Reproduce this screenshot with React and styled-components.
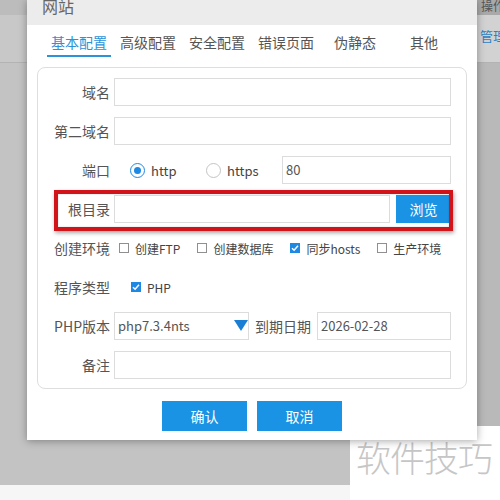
import React from 'react';
import styled, { createGlobalStyle } from 'styled-components';

const GlobalStyle = createGlobalStyle`
  html, body {
    margin: 0;
    padding: 0;
  }
  body {
    font-family: "Noto Sans CJK SC", "Liberation Sans", sans-serif;
    color: #555;
  }
  * {
    box-sizing: border-box;
  }
`;

const BLUE = '#1b93e4';

const tabs = ['基本配置', '高级配置', '安全配置', '错误页面', '伪静态', '其他'];

const envOptions = [
  { label: '创建FTP', checked: false },
  { label: '创建数据库', checked: false },
  { label: '同步hosts', checked: true },
  { label: '生产环境', checked: false }
];

const Page = styled.div`
  position: relative;
  width: 500px;
  height: 500px;
  overflow: hidden;
  display: flex;
  flex-direction: column;
  background: #f6f6f6;
`;

const Backdrop = styled.div`
  height: 485px;
  display: flex;
  flex-direction: row;
  background: #c3c3c3;
`;

const Strip = styled.div`
  width: ${p => p.$width}px;
  display: flex;
  flex-direction: column;
  flex-shrink: 0;
`;

Strip.Head = styled.div`
  height: 15px;
  background: ${p => p.$bg};
  overflow: hidden;
  font-size: 12px;
  line-height: 12px;
  color: #555;
  padding-left: 4px;
  white-space: nowrap;
`;

Strip.Row = styled.div`
  height: 48px;
  background: ${p => p.$bg};
  border-bottom: 1px solid #b3b3b3;
  font-size: 13px;
  line-height: 42px;
  color: #2f7fc4;
  padding-left: 3px;
  white-space: nowrap;
  overflow: hidden;
`;

Strip.Rest = styled.div`
  flex: 1;
  background: ${p => p.$bg};
`;

const Dialog = styled.div`
  width: 450px;
  height: 440px;
  flex-shrink: 0;
  background: #fff;
  box-shadow: 0 1px 8px rgba(0, 0, 0, 0.35);
  display: flex;
  flex-direction: column;
  position: relative;
  z-index: 1;
`;

const Header = styled.div`
  height: 25px;
  background: #ececec;
  padding-left: 15px;
  overflow: hidden;
`;

const Title = styled.div`
  font-size: 16px;
  line-height: 16px;
  margin-top: -2px;
  color: #666;
`;

const TabBar = styled.div`
  display: flex;
  gap: 5px;
  padding-left: 20px;
  height: 32px;
`;

const Tab = styled.div`
  width: 64px;
  height: 32px;
  padding-top: 4px;
  line-height: 26px;
  text-align: center;
  font-size: 14px;
  color: ${p => (p.$active ? '#2d93d8' : '#555')};
  border-bottom: 2px solid ${p => (p.$active ? '#2d93d8' : 'transparent')};
`;

const Panel = styled.div`
  margin: 10px 10px 0;
  border: 1px solid #dedede;
  border-radius: 8px;
  padding: 10px 15px 9px 0;
  display: flex;
  flex-direction: column;
  gap: 11px;
`;

const Row = styled.div`
  position: relative;
  height: 28px;
  display: flex;
  align-items: center;
`;

const Label = styled.div`
  width: ${p => p.$width || 72}px;
  flex-shrink: 0;
  text-align: ${p => (p.$left ? 'left' : 'right')};
  margin: ${p => (p.$left ? '0 6px' : '0 4px 0 0')};
  font-size: 14px;
  color: #555;
  white-space: nowrap;
`;

const Input = styled.div`
  flex: ${p => (p.$width ? '0 0 auto' : '1')};
  width: ${p => (p.$width ? `${p.$width}px` : 'auto')};
  height: 28px;
  border: 1px solid #dcdcdc;
  padding-left: 3px;
  font-size: 13px;
  line-height: 26px;
  color: #555;
  display: flex;
  align-items: center;
  justify-content: space-between;
`;

const Arrow = styled.svg`
  width: 14px;
  height: 12px;
`;

// red marker drawn around the root-directory row
const Highlight = styled.div`
  position: absolute;
  left: 16px;
  right: -2px;
  top: -5px;
  bottom: -8px;
  border: 4px solid #d0141a;
  box-shadow: 1px 2px 4px rgba(0, 0, 0, 0.35), inset 0 0 2px rgba(0, 0, 0, 0.2);
  pointer-events: none;
`;

const Browse = styled.div`
  width: 55px;
  height: 28px;
  margin-left: 6px;
  background: ${BLUE};
  color: #fff;
  font-size: 14px;
  line-height: 28px;
  text-align: center;
`;

const RadioGroup = styled.div`
  display: flex;
  margin-left: 16px;
`;

const RadioItem = styled.div`
  width: 76px;
  display: flex;
  align-items: center;
  gap: 6px;
  font-size: 13px;
  color: #444;
`;

const RadioDot = styled.span`
  width: 15px;
  height: 15px;
  border-radius: 50%;
  border: 1px solid ${p => (p.$on ? '#1e88e5' : '#c4c4c4')};
  display: flex;
  align-items: center;
  justify-content: center;
  &::after {
    content: '';
    width: 7px;
    height: 7px;
    border-radius: 50%;
    background: ${p => (p.$on ? '#1e88e5' : 'transparent')};
  }
`;

const CheckGroup = styled.div`
  display: flex;
  gap: 17px;
  margin-left: ${p => p.$offset}px;
`;

const CheckItem = styled.div`
  display: flex;
  align-items: center;
  gap: 6px;
  font-size: 12px;
  color: #444;
  white-space: nowrap;
`;

const Box = styled.span`
  width: 10px;
  height: 10px;
  border: 1px solid ${p => (p.$on ? '#1e88e5' : '#8f8f8f')};
  background: ${p => (p.$on ? '#1e88e5' : '#fff')};
  display: flex;
  align-items: center;
  justify-content: center;
`;

const Actions = styled.div`
  display: flex;
  justify-content: center;
  gap: 10px;
  margin-top: 12px;
`;

const Button = styled.div`
  width: 85px;
  height: 30px;
  background: ${BLUE};
  color: #fff;
  font-size: 14px;
  line-height: 30px;
  text-align: center;
`;

const Watermark = styled.div`
  position: absolute;
  right: 0;
  bottom: 0;
  width: 150px;
  height: 74px;
  background: #fff;
  padding: 6px 0 0 6px;
  font-size: 35px;
  line-height: 50px;
  font-weight: 300;
  color: #c6c6c6;
  letter-spacing: -1px;
  white-space: nowrap;
`;

const Check = ({ on }) => (
  <Box $on={on}>
    {on && (
      <svg width="8" height="8" viewBox="0 0 8 8">
        <path d="M1 4.2 L3.1 6.2 L7 1.8" fill="none" stroke="#fff" strokeWidth="1.5" />
      </svg>
    )}
  </Box>
);

const App = () => (
  <Page>
    <GlobalStyle />
    <Backdrop>
      <Strip $width={27}>
        <Strip.Head $bg="#bcbcbc" />
        <Strip.Row $bg="#c8c8c8" />
        <Strip.Rest $bg="#c3c3c3" />
      </Strip>
      <Dialog>
        <Header>
          <Title>网站</Title>
        </Header>
        <TabBar>
          {tabs.map((t, i) => (
            <Tab key={t} $active={i === 0}>{t}</Tab>
          ))}
        </TabBar>
        <Panel>
          <Row>
            <Label>域名</Label>
            <Input />
          </Row>
          <Row>
            <Label>第二域名</Label>
            <Input />
          </Row>
          <Row>
            <Label>端口</Label>
            <RadioGroup>
              <RadioItem><RadioDot $on />http</RadioItem>
              <RadioItem><RadioDot />https</RadioItem>
            </RadioGroup>
            <Input>80</Input>
          </Row>
          <Row>
            <Label>根目录</Label>
            <Input />
            <Browse>浏览</Browse>
            <Highlight />
          </Row>
          <Row>
            <Label>创建环境</Label>
            <CheckGroup $offset={5}>
              {envOptions.map(o => (
                <CheckItem key={o.label}>
                  <Check on={o.checked} />
                  {o.label}
                </CheckItem>
              ))}
            </CheckGroup>
          </Row>
          <Row>
            <Label>程序类型</Label>
            <CheckGroup $offset={17}>
              <CheckItem>
                <Check on />
                PHP
              </CheckItem>
            </CheckGroup>
          </Row>
          <Row>
            <Label>PHP版本</Label>
            <Input $width={135}>
              php7.3.4nts
              <Arrow viewBox="0 0 14 12">
                <polygon points="0,0 14,0 7,11" fill="#1a7fd4" />
              </Arrow>
            </Input>
            <Label $left $width={56}>到期日期</Label>
            <Input>2026-02-28</Input>
          </Row>
          <Row>
            <Label>备注</Label>
            <Input />
          </Row>
        </Panel>
        <Actions>
          <Button>确认</Button>
          <Button>取消</Button>
        </Actions>
      </Dialog>
      <Strip $width={23}>
        <Strip.Head $bg="#a9a9a9">操作</Strip.Head>
        <Strip.Row $bg="#d2d2d2">管理</Strip.Row>
        <Strip.Rest $bg="#b9b9b9" />
      </Strip>
    </Backdrop>
    <Watermark>软件技巧</Watermark>
  </Page>
);

export default App;
